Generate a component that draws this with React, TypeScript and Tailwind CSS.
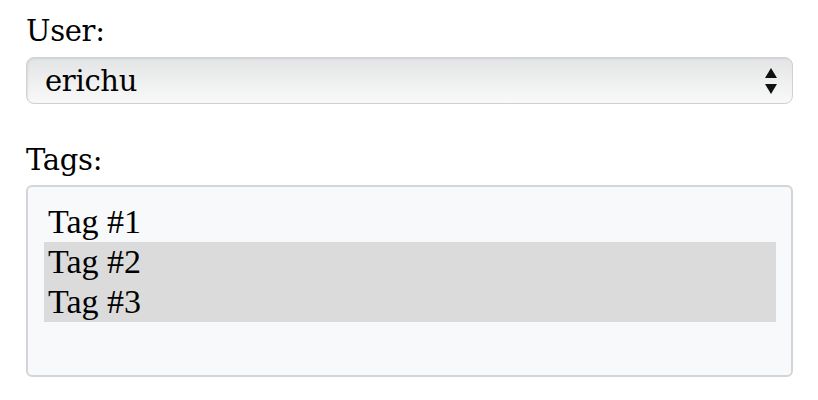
import React from "react";

export default function App() {
  return (
    <div
      className="w-[818px] h-[400px] bg-white text-black pl-[26px] pr-[25px] pt-[11px]"
      style={{ fontFamily: '"Liberation Serif", serif' }}
    >
      <div className="text-[29px] leading-[40px] h-[46px] font-['DejaVu_Serif',serif] tracking-[-0.3px]">User:</div>
      <div className="relative h-[47px] rounded-[8px] border border-[#cfd1d4] bg-gradient-to-b from-[#e3e4e5] to-[#f9f9f9] shadow-[inset_1px_1px_2px_rgba(0,0,0,0.08)] flex items-center pl-[18px]">
        <span className="text-[29px] leading-[40px] font-['DejaVu_Serif',serif] tracking-[-0.3px]">erichu</span>
        <svg className="absolute right-[14px] top-[9px]" width="14" height="28" viewBox="0 0 14 28">
          <polygon points="7,1 13,11 1,11" fill="#111" />
          <polygon points="1,17 13,17 7,27" fill="#111" />
        </svg>
      </div>
      <div className="text-[29px] leading-[40px] mt-[36px] h-[45px] font-['DejaVu_Serif',serif] tracking-[-0.3px]">Tags:</div>
      <div className="h-[192px] rounded-[6px] border-2 border-[#d4d5d8] bg-[#f8f9fb] pt-[15px] pl-[16px] pr-[15px]">
        <div className="text-[34px] leading-[40px] pl-[4px]">Tag #1</div>
        <div className="text-[34px] leading-[40px] pl-[4px] bg-[#dbdbdb]">Tag #2</div>
        <div className="text-[34px] leading-[40px] pl-[4px] bg-[#dbdbdb]">Tag #3</div>
      </div>
    </div>
  );
}
